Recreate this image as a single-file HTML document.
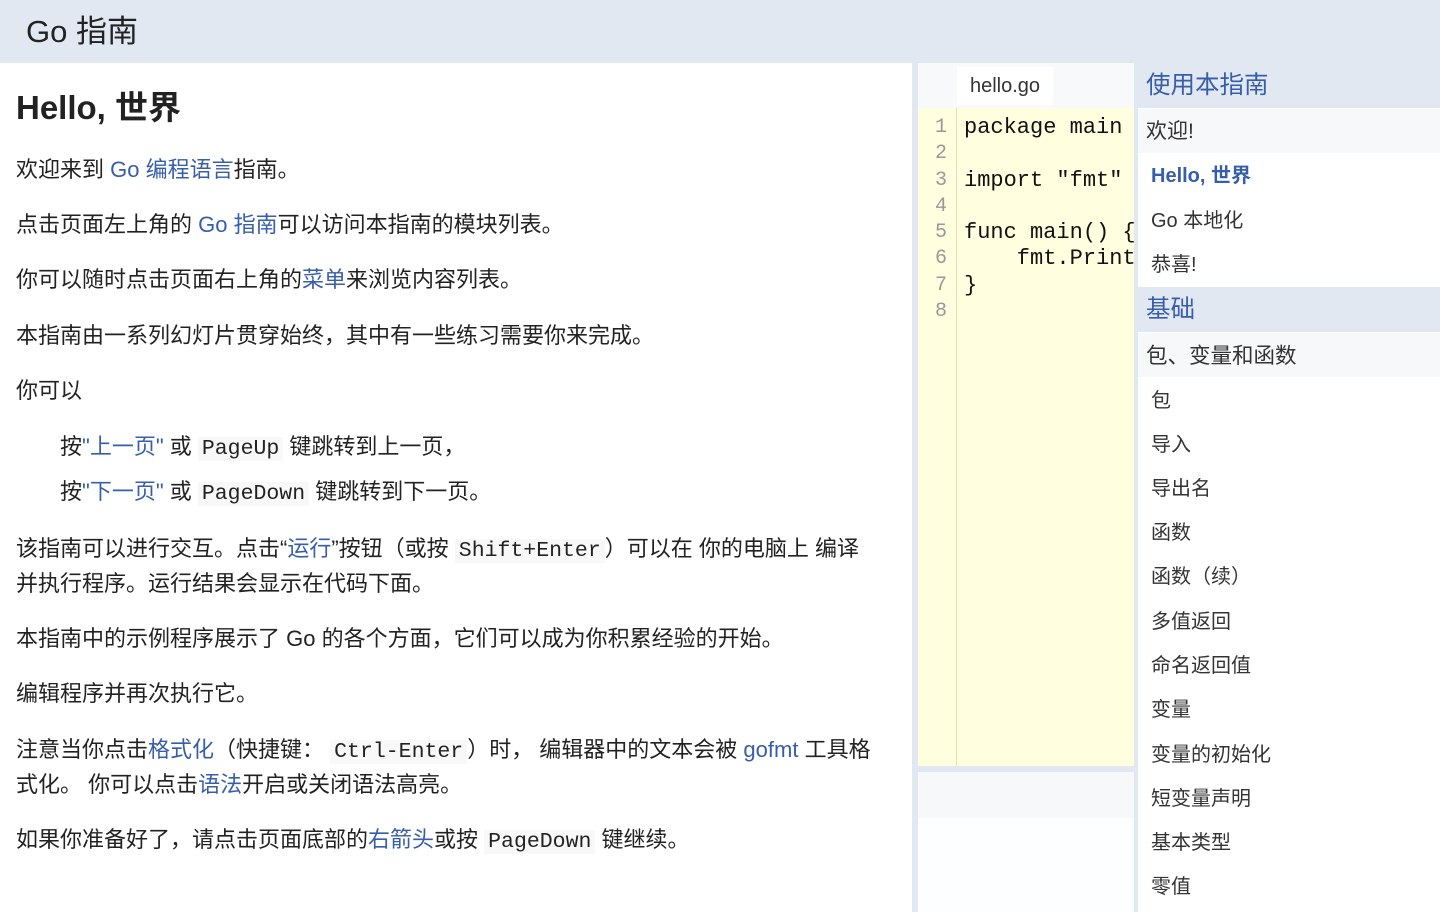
<!DOCTYPE html>
<html><head><meta charset="utf-8"><style>
*{margin:0;padding:0;box-sizing:border-box}
body{width:1440px;height:912px;overflow:hidden;background:#e1e8f2;font-family:"Liberation Sans","Noto Sans CJK SC",sans-serif;color:#222;position:relative}
.a{position:absolute;white-space:nowrap}
#hdr{left:0;top:0;width:1440px;height:63px;background:#e1e8f2;font-size:31px;line-height:63px;padding-left:26px;color:#222}
#left{left:0;top:63px;width:912px;height:849px;background:#fff}
.p{position:absolute;left:16px;font-size:22px;line-height:35px;white-space:nowrap}
.l{color:#375eab}
code{font-family:"Liberation Mono",monospace;font-size:21.5px;background:#f8f8f8;padding:0 4px}
#tabs{left:918px;top:63px;width:216px;height:45px;background:#f8f9fa}
#tab{left:957px;top:67px;width:96px;height:38px;background:#fff;font-size:20px;line-height:38px;text-align:center;color:#333}
#code{left:918px;top:108px;width:216px;height:658px;background:#ffffe0;overflow:hidden}
#gut{left:956px;top:108px;width:1px;height:658px;background:#e6e2b8}
.ln{position:absolute;left:928px;width:26px;text-align:center;font-family:"Liberation Mono",monospace;font-size:20px;color:#999;line-height:26px}
.cl{position:absolute;left:964px;font-family:"Liberation Mono",monospace;font-size:22px;color:#111;line-height:26px;white-space:pre}
#out1{left:918px;top:772px;width:216px;height:46px;background:#f6f8fa}
#out2{left:918px;top:818px;width:216px;height:94px;background:#fdfeff}
#side{left:1138px;top:108px;width:302px;height:804px;background:#fff}
.sh{position:absolute;left:1138px;width:302px;height:45px;background:#e1e8f2;color:#375eab;font-size:24.5px;line-height:45px;padding-left:8px}
.si{position:absolute;left:1151px;font-size:20px;line-height:30px;color:#333;white-space:nowrap}
.st{position:absolute;left:1138px;width:302px;height:44px;background:#f7f8fa}
</style></head><body>
<div class="a" id="hdr">Go 指南</div>
<div class="a" id="left"></div>
<div class="a" style="left:16px;top:86px;font-size:33px;font-weight:bold;line-height:44px">Hello, 世界</div>
<div class="p" style="top:152px">欢迎来到 <span class="l">Go 编程语言</span>指南。</div>
<div class="p" style="top:207px">点击页面左上角的 <span class="l">Go 指南</span>可以访问本指南的模块列表。</div>
<div class="p" style="top:262px">你可以随时点击页面右上角的<span class="l">菜单</span>来浏览内容列表。</div>
<div class="p" style="top:318px">本指南由一系列幻灯片贯穿始终，其中有一些练习需要你来完成。</div>
<div class="p" style="top:373px">你可以</div>
<div class="p" style="top:429px;left:60px">按<span class="l">"上一页"</span> 或 <code>PageUp</code> 键跳转到上一页，</div>
<div class="p" style="top:474px;left:60px">按<span class="l">"下一页"</span> 或 <code>PageDown</code> 键跳转到下一页。</div>
<div class="p" style="top:531px">该指南可以进行交互。点击“<span class="l">运行</span>”按钮（或按 <code>Shift+Enter</code>）可以在 你的电脑上 编译</div>
<div class="p" style="top:566px">并执行程序。运行结果会显示在代码下面。</div>
<div class="p" style="top:621px">本指南中的示例程序展示了 Go 的各个方面，它们可以成为你积累经验的开始。</div>
<div class="p" style="top:676px">编辑程序并再次执行它。</div>
<div class="p" style="top:732px">注意当你点击<span class="l">格式化</span>（快捷键： <code>Ctrl-Enter</code>）时， 编辑器中的文本会被 <span class="l">gofmt</span> 工具格</div>
<div class="p" style="top:767px">式化。 你可以点击<span class="l">语法</span>开启或关闭语法高亮。</div>
<div class="p" style="top:822px">如果你准备好了，请点击页面底部的<span class="l">右箭头</span>或按 <code>PageDown</code> 键继续。</div>

<div class="a" id="tabs"></div>
<div class="a" id="tab">hello.go</div>
<div class="a" id="code"></div>
<div class="a" id="gut"></div>
<div class="ln" style="top:115px">1</div><div class="ln" style="top:141px">2</div><div class="ln" style="top:168px">3</div><div class="ln" style="top:194px">4</div><div class="ln" style="top:220px">5</div><div class="ln" style="top:246px">6</div><div class="ln" style="top:273px">7</div><div class="ln" style="top:299px">8</div>
<div class="cl" style="top:115px">package main</div>
<div class="cl" style="top:168px">import "fmt"</div>
<div class="cl" style="top:220px">func main() {</div>
<div class="cl" style="top:246px;width:170px;overflow:hidden">    fmt.Println</div>
<div class="cl" style="top:273px">}</div>
<div class="a" id="out1"></div>
<div class="a" id="out2"></div>

<div class="a" id="side"></div>
<div class="sh" style="top:63px">使用本指南</div>
<div class="st" style="top:109px"></div>
<div class="si" style="left:1146px;top:117px;font-size:21px">欢迎!</div>
<div class="si" style="top:161px;color:#375eab;font-weight:bold">Hello, 世界</div>
<div class="si" style="top:206px">Go 本地化</div>
<div class="si" style="top:250px">恭喜!</div>
<div class="sh" style="top:287px">基础</div>
<div class="st" style="top:333px"></div>
<div class="si" style="left:1146px;top:341px;font-size:21.5px">包、变量和函数</div>
<div class="si" style="top:386px">包</div>
<div class="si" style="top:430px">导入</div>
<div class="si" style="top:474px">导出名</div>
<div class="si" style="top:518px">函数</div>
<div class="si" style="top:562px">函数（续）</div>
<div class="si" style="top:607px">多值返回</div>
<div class="si" style="top:651px">命名返回值</div>
<div class="si" style="top:695px">变量</div>
<div class="si" style="top:740px">变量的初始化</div>
<div class="si" style="top:784px">短变量声明</div>
<div class="si" style="top:828px">基本类型</div>
<div class="si" style="top:872px">零值</div>
</body></html>
